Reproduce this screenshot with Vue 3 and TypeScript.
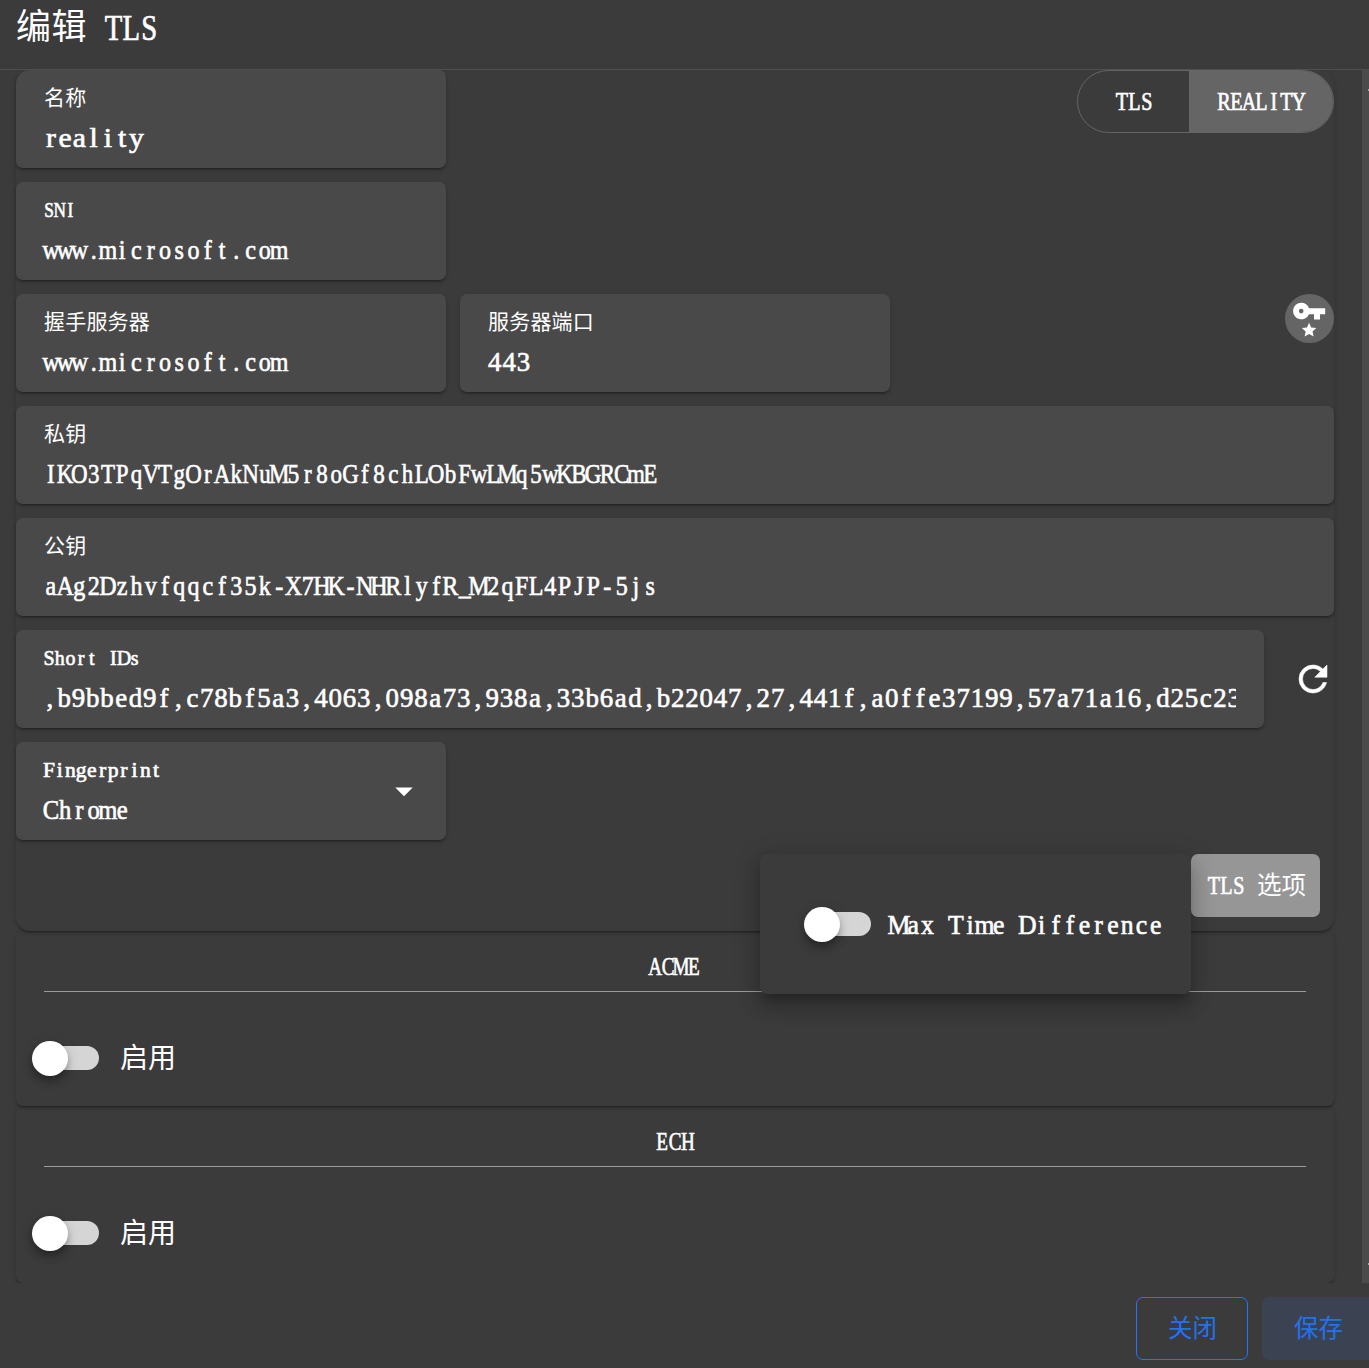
<script setup lang="ts">
import { h, ref } from 'vue'

interface MonoProps {
  text: string
  size: number
  advance: number
  squeeze?: number
}

// Serif text set on a fixed advance: every character is centred in its own cell.
const Mono = (props: MonoProps) => {
  const { text, size, advance } = props
  const squeeze = props.squeeze ?? 0.82
  const xs = Array.from(text).map((_, i) => (((i + 0.48) * advance) / squeeze).toFixed(2))
  return h(
    'svg',
    { width: text.length * advance, height: size, style: 'display:block;overflow:visible;flex:none' },
    [
      h(
        'text',
        {
          x: xs.join(' '),
          y: size * 0.9,
          transform: `scale(${squeeze} 1)`,
          'text-anchor': 'middle',
          'font-family': '"Liberation Serif", serif',
          'font-size': size,
          fill: 'currentColor',
          stroke: 'currentColor',
          'stroke-width': 0.65,
          'xml:space': 'preserve',
        },
        text,
      ),
    ],
  )
}
Mono.props = ['text', 'size', 'advance', 'squeeze']

const name = ref('reality')
const sni = ref('www.microsoft.com')
const server = ref('www.microsoft.com')
const port = ref('443')
const privateKey = ref('IKO3TPqVTgOrAkNuM5r8oGf8chLObFwLMq5wKBGRCmE')
const publicKey = ref('aAg2Dzhvfqqcf35k-X7HK-NHRlyfR_M2qFL4PJP-5js')
const shortIds = ref(',b9bbed9f,c78bf5a3,4063,098a73,938a,33b6ad,b22047,27,441f,a0ffe37199,57a71a16,d25c23')
const fingerprint = ref('Chrome')
const sections = ['ACME', 'ECH']
</script>

<template>
  <div class="dialog">
    <header class="title">
      <span class="han">编辑</span>
      <Mono text="TLS" :size="35" :advance="17.9" />
    </header>

    <main class="body">
      <div class="scroll">
        <section class="card main-card">
          <div class="row">
            <div class="field">
              <label class="label han">名称</label>
              <div class="value"><Mono :text="name" :size="28" :advance="14.27" :squeeze="1.06" /></div>
            </div>
            <div class="toggle">
              <button class="seg"><Mono text="TLS" :size="24.5" :advance="12.47" /></button>
              <button class="seg active"><Mono text="REALITY" :size="24.5" :advance="12.47" /></button>
            </div>
          </div>
          <div class="row">
            <div class="field">
              <label class="label"><Mono text="SNI" :size="21" :advance="10.7" /></label>
              <div class="value"><Mono :text="sni" :size="28" :advance="14.27" :squeeze="0.86" /></div>
            </div>
          </div>
          <div class="row">
            <div class="field">
              <label class="label han">握手服务器</label>
              <div class="value"><Mono :text="server" :size="28" :advance="14.27" :squeeze="0.86" /></div>
            </div>
            <div class="field">
              <label class="label han">服务器端口</label>
              <div class="value"><Mono :text="port" :size="28" :advance="14.27" :squeeze="0.96" /></div>
            </div>
            <button class="key">
              <svg width="49" height="49" viewBox="0 0 49 49">
                <path fill-rule="evenodd" d="M16.2 8.7a8.3 8.3 0 0 1 7.8 5.5H40.2V20.2H35V25.5H29V20.2H24A8.3 8.3 0 1 1 16.2 8.7ZM16.2 14.8a2.3 2.3 0 1 0 0 4.6a2.3 2.3 0 0 0 0-4.6Z" />
                <path d="M24.1 28.7l2.1 4.8 5.2.5-3.9 3.5 1.1 5.1-4.5-2.7-4.5 2.7 1.1-5.1-3.9-3.5 5.2-.5Z" />
              </svg>
            </button>
          </div>
          <div class="row">
            <div class="field wide">
              <label class="label han">私钥</label>
              <div class="value"><Mono :text="privateKey" :size="28" :advance="14.27" :squeeze="0.82" /></div>
            </div>
          </div>
          <div class="row">
            <div class="field wide">
              <label class="label han">公钥</label>
              <div class="value"><Mono :text="publicKey" :size="28" :advance="14.27" :squeeze="0.86" /></div>
            </div>
          </div>
          <div class="row">
            <div class="field wide">
              <label class="label"><Mono text="Short IDs" :size="21" :advance="10.7" :squeeze="0.95" /></label>
              <div class="value clipped"><Mono :text="shortIds" :size="28" :advance="14.27" :squeeze="0.96" /></div>
            </div>
            <button class="refresh">
              <svg width="42" height="42" viewBox="0 0 24 24">
                <path stroke="currentColor" stroke-width="0.3" d="M17.65,6.35C16.2,4.9 14.21,4 12,4A8,8 0 0,0 4,12A8,8 0 0,0 12,20C15.73,20 18.84,17.45 19.73,14H17.65C16.83,16.33 14.61,18 12,18A6,6 0 0,1 6,12A6,6 0 0,1 12,6C13.66,6 15.14,6.69 16.22,7.78L13,11H20V4L17.65,6.35Z" />
              </svg>
            </button>
          </div>
          <div class="row">
            <div class="field select">
              <div class="grow">
                <label class="label"><Mono text="Fingerprint" :size="21" :advance="10.7" :squeeze="1.03" /></label>
                <div class="value"><Mono :text="fingerprint" :size="28" :advance="14.27" :squeeze="0.88" /></div>
              </div>
              <svg class="caret" width="42" height="42" viewBox="0 0 24 24"><path d="M7,10L12,15L17,10H7Z" /></svg>
            </div>
          </div>
          <div class="row options-row">
            <div class="options">
              <button class="options-btn">
                <Mono text="TLS" :size="24.5" :advance="12.4" />
                <span class="han">选项</span>
              </button>
              <div class="menu">
                <span class="switch"><i class="thumb"></i></span>
                <Mono text="Max Time Difference" :size="28" :advance="14.27" :squeeze="0.92" />
              </div>
            </div>
          </div>
        </section>

        <section v-for="s in sections" :key="s" class="card sub-card">
          <div class="subtitle"><Mono :text="s" :size="24.5" :advance="12.9" :squeeze="0.78" /></div>
          <hr />
          <div class="switch-row">
            <span class="switch"><i class="thumb"></i></span>
            <span class="switch-label">启用</span>
          </div>
        </section>
      </div>
      <div class="scrollbar"><i></i><i></i></div>
    </main>

    <footer class="actions">
      <button class="btn outlined">关闭</button>
      <button class="btn tonal">保存</button>
    </footer>
  </div>
</template>

<style>
body {
  background: #3b3b3b;
  overflow: hidden;
}
</style>

<style scoped>
* {
  box-sizing: border-box;
}
.dialog {
  width: 1369px;
  height: 1368px;
  overflow: hidden;
  display: flex;
  flex-direction: column;
  background: #3b3b3b;
  color: #fff;
  font-family: "Liberation Serif", "Noto Sans CJK SC", serif;
}
button {
  border: 0;
  margin: 0;
  padding: 0;
  background: none;
  color: inherit;
  font-family: inherit;
}
svg {
  fill: currentColor;
  display: block;
}
.han {
  padding-top: 2px;
}
.title {
  height: 70px;
  flex: none;
  display: flex;
  gap: 17.9px;
  padding: 8px 16px 0;
  border-bottom: 1px solid #4f4f4f;
  font-size: 35px;
  line-height: 35px;
  letter-spacing: 0.44px;
}
.body {
  height: 1213px;
  flex: none;
  display: flex;
  overflow: hidden;
}
.scroll {
  flex: 1;
  min-width: 0;
  padding: 0 28px 0 16px;
}
.scrollbar {
  width: 7px;
  flex: none;
  background: #4b4b4b;
  display: flex;
  flex-direction: column;
  justify-content: space-between;
  align-items: flex-end;
  padding: 19px 0 18px;
}
.scrollbar i {
  width: 1px;
  height: 2px;
  background: #a5a5a5;
}
.card {
  position: relative;
  background: #3b3b3b;
  box-shadow: 0 3px 2px -2px rgba(0, 0, 0, 0.2), 0 2px 2px rgba(0, 0, 0, 0.14), 0 2px 5px rgba(0, 0, 0, 0.12);
}
.main-card {
  height: 861px;
  border-radius: 14px;
  display: flex;
  flex-direction: column;
  gap: 14px;
  z-index: 2;
}
.row {
  display: flex;
  gap: 14px;
  height: 98px;
  flex: none;
}
.field {
  width: 430px;
  height: 98px;
  border-radius: 7px;
  background: #494949;
  padding: 16px 28px 0;
  box-shadow: 0 3px 2px -2px rgba(0, 0, 0, 0.2), 0 2px 2px rgba(0, 0, 0, 0.14), 0 2px 5px rgba(0, 0, 0, 0.12);
}
.row:first-child .field {
  border-top-left-radius: 14px;
}
.wide {
  flex: 1;
  width: auto;
  min-width: 0;
}
.label {
  display: block;
  height: 21px;
  font-size: 21px;
  line-height: 21px;
  letter-spacing: 0.2px;
}
.value {
  height: 34px;
  margin-top: 14.5px;
}
.clipped {
  overflow: hidden;
}
.clipped > svg {
  margin-left: -1px;
}
.select {
  display: flex;
}
.grow {
  flex: 1;
}
.caret {
  margin: 12px -6.5px 0 0;
}
.toggle {
  margin-left: auto;
  width: 257px;
  height: 63px;
  display: flex;
  border: 1px solid #656565;
  border-radius: 32px;
  overflow: hidden;
}
.seg {
  width: 111px;
  display: flex;
  align-items: center;
  justify-content: center;
  padding: 0 0 2px 2px;
}
.seg.active {
  flex: 1;
  background: #656565;
}
.key {
  margin-left: auto;
  width: 49px;
  height: 49px;
  border-radius: 50%;
  background: #656565;
}
.refresh {
  width: 56px;
  height: 98px;
  display: flex;
  align-items: center;
  padding-left: 13.5px;
}
.options-row {
  height: 63px;
  justify-content: flex-end;
  padding-right: 14px;
}
.options {
  position: relative;
}
.options-btn {
  width: 129px;
  height: 63px;
  border-radius: 7px;
  background: #969696;
  display: flex;
  gap: 12.4px;
  padding: 18px 0 0 16.5px;
  font-size: 24.5px;
  line-height: 24.5px;
}
.menu {
  position: absolute;
  top: 0;
  right: 100%;
  width: 431px;
  height: 140px;
  border-radius: 7px;
  background: #3b3b3b;
  display: flex;
  align-items: center;
  gap: 21px;
  padding-left: 48px;
  box-shadow: 0 9px 9px -5px rgba(0, 0, 0, 0.2), 0 14px 18px 2px rgba(0, 0, 0, 0.14), 0 5px 25px 4px rgba(0, 0, 0, 0.12);
}
.menu > svg {
  margin: 0 -30px 2px 0;
}
.switch {
  width: 63px;
  height: 24px;
  flex: none;
  border-radius: 12px;
  background: #d5d5d5;
  display: flex;
  align-items: center;
}
.thumb {
  width: 36px;
  height: 35px;
  flex: none;
  margin-left: -4px;
  border-radius: 50%;
  background: #fff;
  box-shadow: 0 4px 7px -2px rgba(0, 0, 0, 0.25), 0 7px 9px rgba(0, 0, 0, 0.14), 0 2px 14px rgba(0, 0, 0, 0.12);
}
.sub-card {
  height: 175.3px;
  border-radius: 7px;
  padding: 22px 28px 0;
  z-index: 1;
}
.sub-card:last-child {
  height: 176.7px;
  z-index: 0;
}
.subtitle {
  height: 38px;
  display: flex;
  justify-content: center;
}
hr {
  height: 1px;
  margin: 0;
  border: 0;
  background: #9b9b9b;
}
.switch-row {
  display: flex;
  align-items: center;
  gap: 21px;
  height: 28px;
  margin: 52px 0 0 -8px;
}
.switch-label {
  font-size: 28px;
  line-height: 28px;
  padding-top: 2px;
}
.actions {
  display: flex;
  gap: 14px;
  padding: 14px 0 0 1136px;
}
.btn {
  width: 112px;
  height: 63px;
  flex: none;
  border-radius: 7px;
  padding: 2px 0 0 1px;
  color: #2272f0;
  font-size: 24.5px;
  line-height: 24.5px;
}
.outlined {
  border: 1px solid #1f75ff;
}
.tonal {
  background: #3b4353;
}
</style>
